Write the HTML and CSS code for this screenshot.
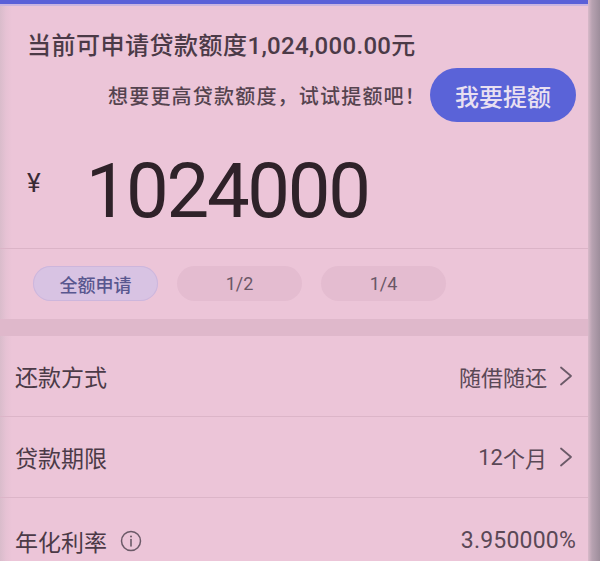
FILE: index.html
```html
<!DOCTYPE html>
<html lang="zh-CN">
<head>
<meta charset="utf-8">
<title>贷款额度</title>
<link rel="stylesheet" href="styles.css">
</head>
<body>
<div class="page">
  <div class="screen">
    <div class="topbar"></div>
    <section class="quota">
      <div class="title">当前可申请贷款额度<span class="num">1,024,000.00</span>元</div>
      <div class="promo">
        <span class="promo-text">想要更高贷款额度，试试提额吧！</span>
        <button class="btn">我要提额</button>
      </div>
      <div class="amount">
        <span class="yen">¥</span>
        <span class="big">1024000</span>
      </div>
    </section>
    <div class="chips">
      <span class="chip active">全额申请</span>
      <span class="chip">1/2</span>
      <span class="chip">1/4</span>
    </div>
    <div class="band"></div>
    <div class="row">
      <span class="label">还款方式</span>
      <span class="value">随借随还<svg class="chev" viewBox="0 0 14 20" width="14" height="20"><path d="M2 1.5 L12 10 L2 18.5" fill="none" stroke="#6b5a68" stroke-width="1.8" stroke-linecap="round" stroke-linejoin="round"/></svg></span>
    </div>
    <div class="row">
      <span class="label">贷款期限</span>
      <span class="value"><span class="num">12</span>个月<svg class="chev" viewBox="0 0 14 20" width="14" height="20"><path d="M2 1.5 L12 10 L2 18.5" fill="none" stroke="#6b5a68" stroke-width="1.8" stroke-linecap="round" stroke-linejoin="round"/></svg></span>
    </div>
    <div class="row last">
      <span class="label">年化利率<svg class="info" viewBox="0 0 22 22" width="22" height="22"><circle cx="11" cy="11" r="9.5" fill="none" stroke="#6b5a68" stroke-width="1.5"/><line x1="11" y1="9.5" x2="11" y2="16" stroke="#6b5a68" stroke-width="1.6" stroke-linecap="round"/><circle cx="11" cy="6.5" r="1" fill="#6b5a68"/></svg></span>
      <span class="value num">3.950000%</span>
    </div>
  </div>
  <div class="edge"></div>
</div>
</body>
</html>
```

FILE: styles.css
```css
html, body {
  margin: 0;
  padding: 0;
}
body {
  width: 600px;
  height: 561px;
  overflow: hidden;
  background: #ecc5d8;
  font-family: "Noto Sans CJK SC", "Noto Sans", sans-serif;
  color: #4a3844;
}
.page {
  display: flex;
  height: 561px;
}
.screen {
  width: 588px;
  height: 561px;
  overflow: hidden;
  background: linear-gradient(to right, #d9bccb 0, #e6c2d4 6px, #ecc5d8 12px, #ecc5d8 100%);
  display: flex;
  flex-direction: column;
}
.screen > * {
  flex-shrink: 0;
}
.edge {
  width: 12px;
  height: 561px;
  background: linear-gradient(to right, #d8b9c9 0, #b7a2b1 4px, #9d8d9b 100%);
}
.topbar {
  height: 4px;
  background: #5a60d8;
  border-bottom: 2px solid #c9b4e0;
}
.quota {
  padding: 0 12px 0 27px;
  border-bottom: 1px solid #dbb4c7;
}
.num {
  font-family: Roboto, "Noto Sans", sans-serif;
}
.title {
  margin-top: 22px;
  font-size: 24px;
  line-height: 32px;
  font-weight: 500;
  color: #4b3a47;
  letter-spacing: 0.5px;
}
.title .num {
  letter-spacing: 0.3px;
}
.promo {
  margin-top: 6px;
  display: flex;
  justify-content: flex-end;
  align-items: center;
  gap: 4px;
}
.promo-text {
  font-size: 20px;
  font-weight: 500;
  color: #55434f;
  letter-spacing: 1.2px;
}
.btn {
  width: 146px;
  height: 54px;
  border: none;
  border-radius: 27px;
  background: #5a63d8;
  color: #e9e0f1;
  font-family: "Noto Sans CJK SC", sans-serif;
  font-size: 24px;
  font-weight: 500;
  padding: 0;
}
.amount {
  margin-top: 31px;
  padding-bottom: 19px;
  display: flex;
  align-items: flex-start;
}
.yen {
  font-family: Roboto, sans-serif;
  font-size: 26px;
  line-height: 26px;
  margin-top: 17px;
  color: #3a2b35;
}
.big {
  font-family: Roboto, sans-serif;
  font-size: 76px;
  line-height: 76px;
  letter-spacing: -2.3px;
  margin-left: 45px;
  color: #2f2229;
}
.chips {
  display: flex;
  gap: 19px;
  padding: 17px 0 18px 33px;
}
.chip {
  width: 125px;
  height: 35px;
  border-radius: 18px;
  background: #e4bcd0;
  display: flex;
  align-items: center;
  justify-content: center;
  font-family: Roboto, "Noto Sans CJK SC", sans-serif;
  font-size: 18px;
  color: #6a5766;
}
.chip.active {
  background: #d8c3e3;
  color: #59578f;
  font-family: "Noto Sans CJK SC", sans-serif;
  font-weight: 500;
  box-shadow: inset 0 0 0 1px #cdb6dc;
}
.band {
  height: 17px;
  background: #dfb8cb;
}
.row {
  height: 81px;
  box-sizing: border-box;
  border-bottom: 1px solid #dcb5c8;
  display: flex;
  align-items: center;
  justify-content: space-between;
  padding: 0 12px 0 15px;
}
.row.last {
  border-bottom: none;
  padding-top: 4px;
}
.label {
  font-size: 23px;
  color: #4b3a47;
  display: flex;
  align-items: center;
}
.value {
  font-size: 22px;
  color: #5a4856;
  display: flex;
  align-items: center;
}
.value.num {
  font-size: 23px;
  font-family: Roboto, sans-serif;
  letter-spacing: 0.2px;
}
.chev {
  margin-left: 12px;
  margin-right: 3px;
}
.info {
  margin-left: 13px;
}
```
